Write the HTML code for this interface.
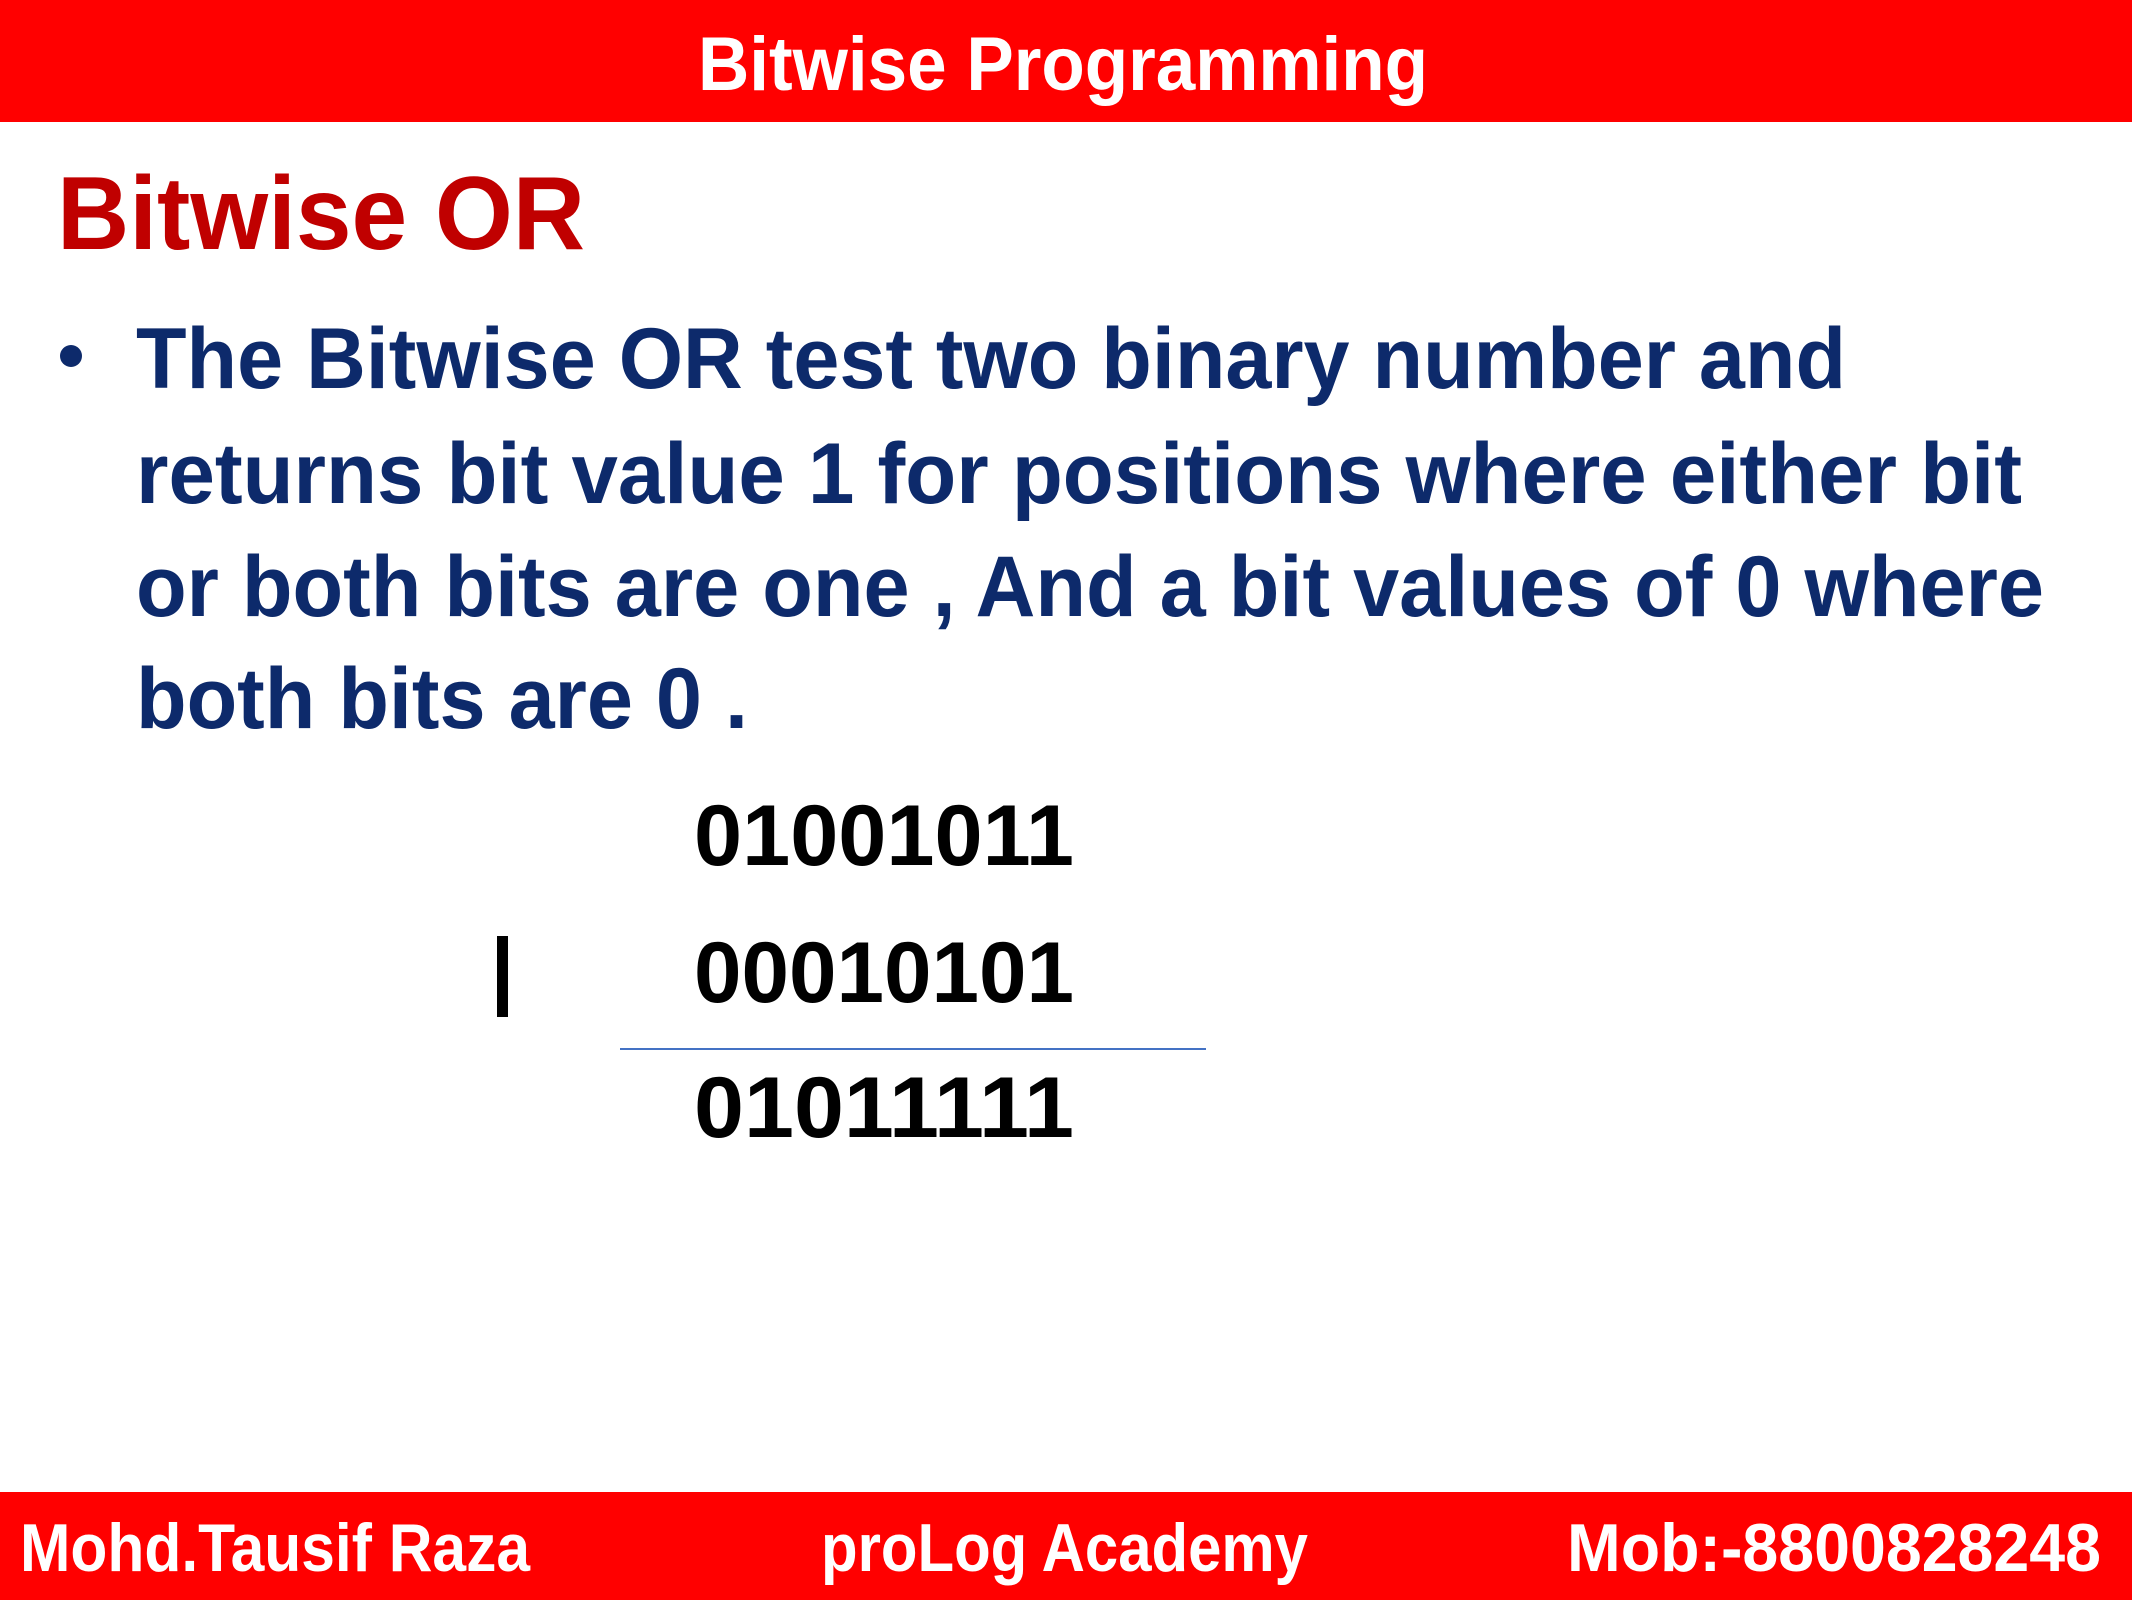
<!DOCTYPE html>
<html><head><meta charset="utf-8"><style>html,body{margin:0;padding:0;background:#fff}svg{display:block}</style></head>
<body>
<svg width="2132" height="1600" viewBox="0 0 2132 1600" xmlns="http://www.w3.org/2000/svg" font-family="Liberation Sans, sans-serif" font-weight="bold">
<rect x="0" y="0" width="2132" height="122" fill="#FF0000"/>
<text x="698" y="90" font-size="76" fill="#fff" textLength="730" lengthAdjust="spacingAndGlyphs">Bitwise Programming</text>
<text x="57" y="249" font-size="104" fill="#C00000" textLength="528" lengthAdjust="spacingAndGlyphs">Bitwise OR</text>
<circle cx="71" cy="356" r="11" fill="#0D2A6B"/>
<g fill="#0D2A6B" font-size="86">
<text x="136" y="388" textLength="1710" lengthAdjust="spacingAndGlyphs">The Bitwise OR test two binary number and</text>
<text x="136" y="503" textLength="1886" lengthAdjust="spacingAndGlyphs">returns bit value 1 for positions where either bit</text>
<text x="136" y="616" textLength="1908" lengthAdjust="spacingAndGlyphs">or both bits are one , And a bit values of 0 where</text>
<text x="136" y="728" textLength="612" lengthAdjust="spacingAndGlyphs">both bits are 0 .</text>
</g>
<g fill="#000" font-size="86">
<text x="694" y="865" textLength="380" lengthAdjust="spacingAndGlyphs">01001011</text>
<text x="694" y="1002" textLength="380" lengthAdjust="spacingAndGlyphs">00010101</text>
<text x="694" y="1137" textLength="380" lengthAdjust="spacingAndGlyphs">01011111</text>
</g>
<rect x="497" y="936" width="11" height="81" fill="#000"/>
<rect x="620" y="1048" width="586" height="2" fill="#4472C4"/>
<rect x="0" y="1492" width="2132" height="108" fill="#FF0000"/>
<g fill="#fff" font-size="68">
<text x="20" y="1571" textLength="510" lengthAdjust="spacingAndGlyphs">Mohd.Tausif Raza</text>
<text x="821" y="1571" textLength="487" lengthAdjust="spacingAndGlyphs">proLog Academy</text>
<text x="1567" y="1571" textLength="534" lengthAdjust="spacingAndGlyphs">Mob:-8800828248</text>
</g>
</svg>
</body></html>
